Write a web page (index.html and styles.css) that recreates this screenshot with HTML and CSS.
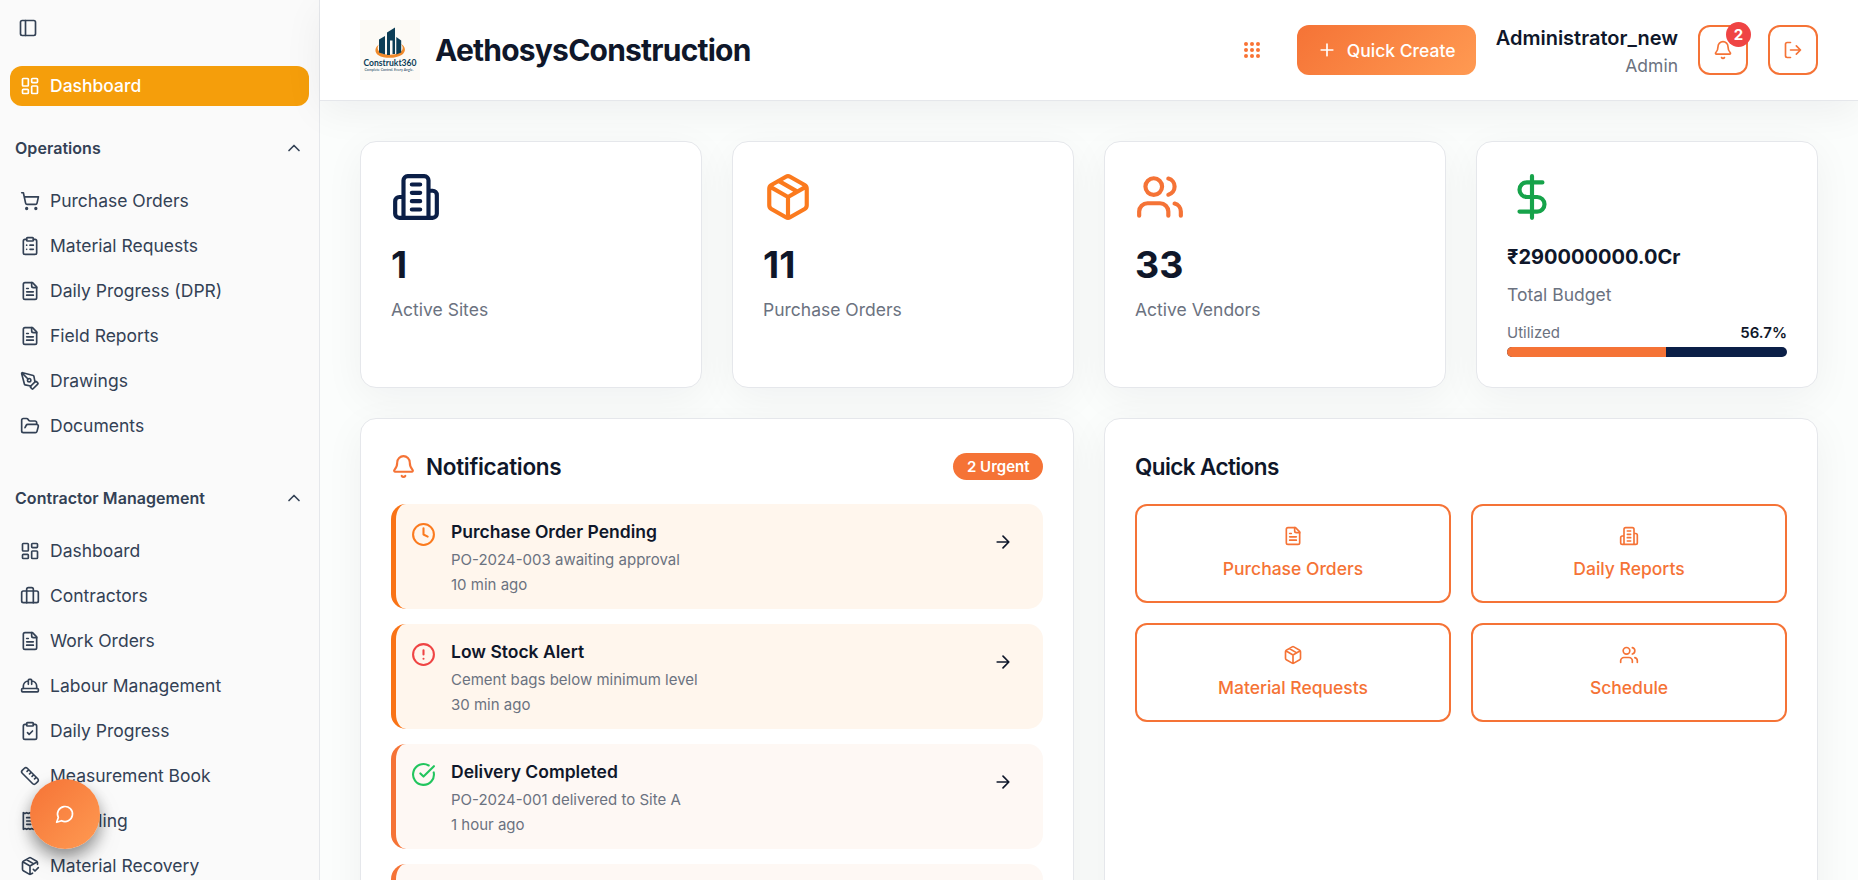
FILE: index.html
```html
<!DOCTYPE html>
<html lang="en">
<head>
    <meta charset="UTF-8">
    <meta name="viewport" content="width=device-width, initial-scale=1.0">
    <title>AethosysConstruction</title>
    <link rel="stylesheet" href="styles.css">
</head>
<body>
    <!-- Icon set -->
    <svg class="sprite" xmlns="http://www.w3.org/2000/svg">
        <symbol id="panel" viewBox="0 0 24 24"><rect width="18" height="18" x="3" y="3" rx="2"/><path d="M9 3v18"/></symbol>
        <symbol id="dashboard" viewBox="0 0 24 24"><rect width="7" height="9" x="3" y="3" rx="1"/><rect width="7" height="5" x="14" y="3" rx="1"/><rect width="7" height="9" x="14" y="12" rx="1"/><rect width="7" height="5" x="3" y="16" rx="1"/></symbol>
        <symbol id="chevron" viewBox="0 0 24 24"><path d="m18 15-6-6-6 6"/></symbol>
        <symbol id="cart" viewBox="0 0 24 24"><circle cx="8" cy="21" r="1"/><circle cx="19" cy="21" r="1"/><path d="M2.05 2.05h2l2.66 12.42a2 2 0 0 0 2 1.58h9.78a2 2 0 0 0 1.95-1.57l1.65-7.43H5.12"/></symbol>
        <symbol id="clipboard-list" viewBox="0 0 24 24"><rect width="8" height="4" x="8" y="2" rx="1"/><path d="M16 4h2a2 2 0 0 1 2 2v14a2 2 0 0 1-2 2H6a2 2 0 0 1-2-2V6a2 2 0 0 1 2-2h2M12 11h4M12 16h4M8 11h.01M8 16h.01"/></symbol>
        <symbol id="clipboard-check" viewBox="0 0 24 24"><rect width="8" height="4" x="8" y="2" rx="1"/><path d="M16 4h2a2 2 0 0 1 2 2v14a2 2 0 0 1-2 2H6a2 2 0 0 1-2-2V6a2 2 0 0 1 2-2h2M9 14l2 2 4-4"/></symbol>
        <symbol id="file" viewBox="0 0 24 24"><path d="M15 2H6a2 2 0 0 0-2 2v16a2 2 0 0 0 2 2h12a2 2 0 0 0 2-2V7Z"/><path d="M14 2v4a2 2 0 0 0 2 2h4M10 9H8M16 13H8M16 17H8"/></symbol>
        <symbol id="pen" viewBox="0 0 24 24"><path d="M15.707 21.293a1 1 0 0 1-1.414 0l-1.586-1.586a1 1 0 0 1 0-1.414l5.586-5.586a1 1 0 0 1 1.414 0l1.586 1.586a1 1 0 0 1 0 1.414z"/><path d="m18 13-1.375-6.874a1 1 0 0 0-.746-.776L3.235 2.028a1 1 0 0 0-1.207 1.207L5.35 15.879a1 1 0 0 0 .776.746L13 18M2.3 2.3l7.286 7.286"/><circle cx="11" cy="11" r="2"/></symbol>
        <symbol id="folder" viewBox="0 0 24 24"><path d="m6 14 1.5-2.9A2 2 0 0 1 9.24 10H20a2 2 0 0 1 1.94 2.5l-1.54 6a2 2 0 0 1-1.95 1.5H4a2 2 0 0 1-2-2V5a2 2 0 0 1 2-2h3.9a2 2 0 0 1 1.69.9l.81 1.2a2 2 0 0 0 1.67.9H18a2 2 0 0 1 2 2v2"/></symbol>
        <symbol id="briefcase" viewBox="0 0 24 24"><path d="M16 20V4a2 2 0 0 0-2-2h-4a2 2 0 0 0-2 2v16"/><rect width="20" height="14" x="2" y="6" rx="2"/></symbol>
        <symbol id="hat" viewBox="0 0 24 24"><path d="M10 10V5a1 1 0 0 1 1-1h2a1 1 0 0 1 1 1v5M14 6a6 6 0 0 1 6 6v3M4 15v-3a6 6 0 0 1 6-6"/><rect x="2" y="15" width="20" height="4" rx="1"/></symbol>
        <symbol id="ruler" viewBox="0 0 24 24"><path d="M21.3 15.3a2.4 2.4 0 0 1 0 3.4l-2.6 2.6a2.4 2.4 0 0 1-3.4 0L2.7 8.7a2.41 2.41 0 0 1 0-3.4l2.6-2.6a2.41 2.41 0 0 1 3.4 0ZM14.5 12.5l2-2M11.5 9.5l2-2M8.5 6.5l2-2M17.5 15.5l2-2"/></symbol>
        <symbol id="receipt" viewBox="0 0 24 24"><path d="M4 2v20l2-1 2 1 2-1 2 1 2-1 2 1 2-1 2 1V2l-2 1-2-1-2 1-2-1-2 1-2-1-2 1ZM14 8H8M16 12H8M13 16H8"/></symbol>
        <symbol id="package" viewBox="0 0 24 24"><path d="M11 21.73a2 2 0 0 0 2 0l7-4A2 2 0 0 0 21 16V8a2 2 0 0 0-1-1.73l-7-4a2 2 0 0 0-2 0l-7 4A2 2 0 0 0 3 8v8a2 2 0 0 0 1 1.73zM12 22V12M3.3 7 12 12l8.7-5M7.5 4.27l9 5.15"/></symbol>
        <symbol id="package-check" viewBox="0 0 24 24"><path d="m16 16 2 2 4-4"/><path d="M21 10V8a2 2 0 0 0-1-1.73l-7-4a2 2 0 0 0-2 0l-7 4A2 2 0 0 0 3 8v8a2 2 0 0 0 1 1.73l7 4a2 2 0 0 0 2 0l2-1.14M7.5 4.27l9 5.15M3.29 7 12 12l8.71-5M12 22V12"/></symbol>
        <symbol id="building" viewBox="0 0 24 24"><path d="M6 22V4a2 2 0 0 1 2-2h8a2 2 0 0 1 2 2v18ZM6 12H4a2 2 0 0 0-2 2v6a2 2 0 0 0 2 2h2M18 9h2a2 2 0 0 1 2 2v9a2 2 0 0 1-2 2h-2M10 6h4M10 10h4M10 14h4M10 18h4"/></symbol>
        <symbol id="users" viewBox="0 0 24 24"><path d="M16 21v-2a4 4 0 0 0-4-4H6a4 4 0 0 0-4 4v2"/><circle cx="9" cy="7" r="4"/><path d="M22 21v-2a4 4 0 0 0-3-3.87M16 3.13a4 4 0 0 1 0 7.75"/></symbol>
        <symbol id="dollar" viewBox="0 0 24 24"><path d="M12 2v20M17 5H9.5a3.5 3.5 0 0 0 0 7h5a3.5 3.5 0 0 1 0 7H6"/></symbol>
        <symbol id="bell" viewBox="0 0 24 24"><path d="M10.268 21a2 2 0 0 0 3.464 0M3.262 15.326A1 1 0 0 0 4 17h16a1 1 0 0 0 .74-1.673C19.41 13.956 18 12.499 18 8A6 6 0 0 0 6 8c0 4.499-1.411 5.956-2.738 7.326"/></symbol>
        <symbol id="logout" viewBox="0 0 24 24"><path d="M9 21H5a2 2 0 0 1-2-2V5a2 2 0 0 1 2-2h4M16 17l5-5-5-5M21 12H9"/></symbol>
        <symbol id="plus" viewBox="0 0 24 24"><path d="M5 12h14M12 5v14"/></symbol>
        <symbol id="arrow" viewBox="0 0 24 24"><path d="M5 12h14M12 5l7 7-7 7"/></symbol>
        <symbol id="clock" viewBox="0 0 24 24"><circle cx="12" cy="12" r="10"/><path d="M12 6v6l4 2"/></symbol>
        <symbol id="alert" viewBox="0 0 24 24"><circle cx="12" cy="12" r="10"/><path d="M12 8v4M12 16h.01"/></symbol>
        <symbol id="check" viewBox="0 0 24 24"><path d="M21.801 10A10 10 0 1 1 17 3.335M9 11l3 3L22 4"/></symbol>
        <symbol id="chat" viewBox="0 0 24 24"><path d="M7.9 20A9 9 0 1 0 4 16.1L2 22Z"/></symbol>
    </svg>

    <div class="app">
        <aside class="sidebar">
            <button class="toggle"><svg class="icon"><use href="#panel"/></svg></button>
            <a class="nav-item active"><svg class="icon"><use href="#dashboard"/></svg>Dashboard</a>

            <div class="nav-title"><span>Operations</span><svg class="icon"><use href="#chevron"/></svg></div>
            <nav class="nav-group">
                <a class="nav-item"><svg class="icon"><use href="#cart"/></svg>Purchase Orders</a>
                <a class="nav-item"><svg class="icon"><use href="#clipboard-list"/></svg>Material Requests</a>
                <a class="nav-item"><svg class="icon"><use href="#file"/></svg>Daily Progress (DPR)</a>
                <a class="nav-item"><svg class="icon"><use href="#file"/></svg>Field Reports</a>
                <a class="nav-item"><svg class="icon"><use href="#pen"/></svg>Drawings</a>
                <a class="nav-item"><svg class="icon"><use href="#folder"/></svg>Documents</a>
            </nav>

            <div class="nav-title"><span>Contractor Management</span><svg class="icon"><use href="#chevron"/></svg></div>
            <nav class="nav-group">
                <a class="nav-item"><svg class="icon"><use href="#dashboard"/></svg>Dashboard</a>
                <a class="nav-item"><svg class="icon"><use href="#briefcase"/></svg>Contractors</a>
                <a class="nav-item"><svg class="icon"><use href="#file"/></svg>Work Orders</a>
                <a class="nav-item"><svg class="icon"><use href="#hat"/></svg>Labour Management</a>
                <a class="nav-item"><svg class="icon"><use href="#clipboard-check"/></svg>Daily Progress</a>
                <a class="nav-item"><svg class="icon"><use href="#ruler"/></svg>Measurement Book</a>
                <a class="nav-item"><svg class="icon"><use href="#receipt"/></svg>RA Billing</a>
                <a class="nav-item"><svg class="icon"><use href="#package-check"/></svg>Material Recovery</a>
            </nav>
        </aside>

        <div class="main">
            <header class="topbar">
                <svg class="logo" viewBox="0 0 60 60">
                    <rect width="60" height="60" fill="#fcfaf6"/>
                    <path d="M19 24.500c-4.500 3-4.800 8-.500 10.800 5.500 3.600 18 3.400 23.500-.500 4.300-3.200 3.800-8.300-1-10.800 2.600 3 2.300 6.300-1.500 8.500-5.200 3-14.500 3-19 0-3.200-2.200-3.600-5-1.500-8Z" fill="#f08a2c"/>
                    <path d="M19 19.500l6-3.500v18.500l-6-2ZM27 12.500l8-5V34h-2.500V20.500h-2.500V35h-3ZM36.300 17l4.900 3.500v12l-4.900 2Z" fill="#0c3d56"/>
                    <text x="30" y="45.500" class="logo-name" textLength="53" lengthAdjust="spacingAndGlyphs">Construkt360</text>
                    <text x="29" y="50.500" class="logo-tag" textLength="49" lengthAdjust="spacingAndGlyphs">Complete Control. Every Angle.</text>
                </svg>
                <h1>AethosysConstruction</h1>

                <svg class="apps" viewBox="0 0 16 16">
                    <circle cx="2" cy="2" r="2"/><circle cx="8" cy="2" r="2"/><circle cx="14" cy="2" r="2"/>
                    <circle cx="2" cy="8" r="2"/><circle cx="8" cy="8" r="2"/><circle cx="14" cy="8" r="2"/>
                    <circle cx="2" cy="14" r="2"/><circle cx="8" cy="14" r="2"/><circle cx="14" cy="14" r="2"/>
                </svg>
                <button class="create"><svg class="icon"><use href="#plus"/></svg>Quick Create</button>
                <div class="user">
                    <div class="user-name">Administrator_new</div>
                    <div class="user-role">Admin</div>
                </div>
                <button class="square"><svg class="icon"><use href="#bell"/></svg><span class="count">2</span></button>
                <button class="square"><svg class="icon"><use href="#logout"/></svg></button>
            </header>

            <main class="content">
                <section class="stats">
                    <div class="card">
                        <svg class="icon navy"><use href="#building"/></svg>
                        <div class="value">1</div>
                        <div class="label">Active Sites</div>
                    </div>
                    <div class="card">
                        <svg class="icon amber"><use href="#package"/></svg>
                        <div class="value">11</div>
                        <div class="label">Purchase Orders</div>
                    </div>
                    <div class="card">
                        <svg class="icon orange"><use href="#users"/></svg>
                        <div class="value">33</div>
                        <div class="label">Active Vendors</div>
                    </div>
                    <div class="card">
                        <svg class="icon green"><use href="#dollar"/></svg>
                        <div class="value small">₹290000000.0Cr</div>
                        <div class="label">Total Budget</div>
                        <div class="usage"><span>Utilized</span><strong>56.7%</strong></div>
                        <div class="bar"><div class="bar-fill" style="width: 56.7%"></div></div>
                    </div>
                </section>

                <section class="panels">
                    <div class="card panel">
                        <div class="panel-head">
                            <svg class="icon orange"><use href="#bell"/></svg>
                            <h2>Notifications</h2>
                            <span class="urgent">2 Urgent</span>
                        </div>
                        <div class="notices">
                            <div class="notice pending">
                                <svg class="icon amber"><use href="#clock"/></svg>
                                <div class="notice-text"><h3>Purchase Order Pending</h3><p>PO-2024-003 awaiting approval</p><p>10 min ago</p></div>
                                <svg class="icon go"><use href="#arrow"/></svg>
                            </div>
                            <div class="notice pending">
                                <svg class="icon red"><use href="#alert"/></svg>
                                <div class="notice-text"><h3>Low Stock Alert</h3><p>Cement bags below minimum level</p><p>30 min ago</p></div>
                                <svg class="icon go"><use href="#arrow"/></svg>
                            </div>
                            <div class="notice">
                                <svg class="icon lime"><use href="#check"/></svg>
                                <div class="notice-text"><h3>Delivery Completed</h3><p>PO-2024-001 delivered to Site A</p><p>1 hour ago</p></div>
                                <svg class="icon go"><use href="#arrow"/></svg>
                            </div>
                            <div class="notice"></div>
                        </div>
                    </div>

                    <div class="card panel">
                        <div class="panel-head"><h2 class="tight">Quick Actions</h2></div>
                        <div class="actions">
                            <button class="action"><svg class="icon"><use href="#file"/></svg>Purchase Orders</button>
                            <button class="action"><svg class="icon"><use href="#building"/></svg>Daily Reports</button>
                            <button class="action"><svg class="icon"><use href="#package"/></svg>Material Requests</button>
                            <button class="action"><svg class="icon"><use href="#users"/></svg>Schedule</button>
                        </div>
                    </div>
                </section>
            </main>
        </div>
    </div>

    <button class="chat"><svg class="icon"><use href="#chat"/></svg></button>
</body>
</html>
```
FILE: styles.css
```css
* {
    box-sizing: border-box;
}

body {
    margin: 0;
    height: 100vh;
    overflow: hidden;
    font-family: "Inter", sans-serif;
    font-size: 17.5px;
    line-height: 25px;
    color: #0f172a;
    background-color: #fbfdfc;
}

h1, h2, h3, p {
    margin: 0;
}

button {
    font: inherit;
    color: inherit;
    background: none;
    border: none;
    padding: 0;
    cursor: pointer;
}

.sprite {
    display: none;
}

.icon {
    width: 20px;
    height: 20px;
    flex-shrink: 0;
    fill: none;
    stroke: currentColor;
    stroke-width: 2;
    stroke-linecap: round;
    stroke-linejoin: round;
}

.app {
    display: flex;
    height: 100vh;
    overflow: hidden;
}

/* Sidebar */
.sidebar {
    width: 320px;
    flex-shrink: 0;
    padding: 18px 10px 0;
    overflow: hidden;
    background-color: #fafafa;
    border-right: 1px solid #e5e7eb;
    color: #334155;
}

.toggle {
    display: block;
    height: 20px;
    margin: 0 0 28px 8px;
}

.toggle svg {
    display: block;
}

.nav-item {
    display: flex;
    align-items: center;
    gap: 10px;
    height: 40px;
    padding: 0 10px;
    border-radius: 12px;
    line-height: 24px;
}

.nav-item.active {
    background-color: #f59e0b;
    color: white;
    font-weight: 500;
}

.nav-title {
    display: flex;
    align-items: center;
    justify-content: space-between;
    height: 40px;
    margin: 22px 5px 13px 5px;
    font-size: 16px;
    font-weight: 600;
    letter-spacing: 0.05px;
}

.nav-group {
    display: flex;
    flex-direction: column;
    gap: 5px;
}

.nav-group + .nav-title {
    margin-top: 32px;
}

/* Header */
.main {
    flex: 1;
    min-width: 0;
}

.topbar {
    position: relative;
    display: flex;
    align-items: center;
    height: 101px;
    padding: 0 40px;
    background-color: white;
    border-bottom: 1px solid #e5e7eb;
    box-shadow: 0 10px 40px rgba(15, 23, 42, 0.06);
}

.logo {
    width: 60px;
    height: 60px;
    margin-right: 15px;
}

.logo-name, .logo-tag {
    font-family: "Lato", sans-serif;
    font-size: 8.5px;
    font-weight: 700;
    fill: #0c3d56;
    text-anchor: middle;
}

.logo-tag {
    font-size: 3.6px;
    font-weight: 400;
}

h1 {
    font-size: 30px;
    line-height: 40px;
    font-weight: 700;
    letter-spacing: -0.78px;
}

.apps {
    width: 16px;
    height: 16px;
    margin-left: auto;
    margin-right: 37px;
    fill: #f97334;
}

.create {
    display: flex;
    align-items: center;
    justify-content: center;
    gap: 10px;
    width: 179px;
    height: 50px;
    margin-right: 20px;
    border-radius: 12px;
    background: linear-gradient(135deg, #f57336, #ff9a52);
    color: white;
    font-weight: 500;
}

.user {
    margin-right: 20px;
    text-align: right;
}

.user-name {
    font-size: 20px;
    line-height: 30px;
    font-weight: 600;
}

.user-role {
    color: #6b7280;
}

.square {
    position: relative;
    display: flex;
    align-items: center;
    justify-content: center;
    width: 50px;
    height: 50px;
    border: 2px solid #f57336;
    border-radius: 12px;
    color: #f57336;
}

.square + .square {
    margin-left: 20px;
}

.count {
    position: absolute;
    top: -5px;
    right: -5px;
    width: 25px;
    height: 25px;
    border-radius: 50%;
    background-color: #ef4444;
    color: white;
    font-size: 15px;
    font-weight: 700;
}

/* Dashboard */
.content {
    padding: 40px;
}

.card {
    padding: 30px;
    border: 1px solid #e5e7eb;
    border-radius: 16px;
    background-color: white;
    box-shadow: 0 10px 40px rgba(15, 23, 42, 0.05);
}

.stats {
    display: grid;
    grid-template-columns: repeat(4, 1fr);
    gap: 30px;
    margin-bottom: 30px;
}

.stats .card {
    height: 247px;
}

.stats .icon {
    display: block;
    width: 50px;
    height: 50px;
    margin-bottom: 20px;
}

.value {
    font-size: 37.5px;
    line-height: 45px;
    font-weight: 700;
    margin-bottom: 10px;
}

.value.small {
    font-size: 20px;
    line-height: 30px;
}

.label {
    color: #6b7280;
}

.usage {
    display: flex;
    justify-content: space-between;
    margin-top: 16px;
    font-size: 15px;
    line-height: 20px;
    color: #6b7280;
}

.usage strong {
    font-weight: 600;
    color: #0f172a;
}

.bar {
    height: 10px;
    margin-top: 4px;
    overflow: hidden;
    border-radius: 5px;
    background-color: #0b1f47;
}

.bar-fill {
    height: 100%;
    background-color: #f57336;
}

.navy { color: #0b1f47; }
.amber { color: #fb7a1e; }
.orange { color: #f57336; }
.green { color: #16a34a; }
.lime { color: #22c55e; }
.red { color: #ef4444; }

.panels {
    display: grid;
    grid-template-columns: 1fr 1fr;
    gap: 30px;
}

.panel {
    height: 640px;
}

.panel-head {
    display: flex;
    align-items: center;
    height: 35px;
    margin-bottom: 20px;
}

.panel-head .icon {
    width: 25px;
    height: 25px;
    margin-right: 10px;
}

h2 {
    font-size: 22.5px;
    line-height: 35px;
    font-weight: 600;
    letter-spacing: -0.3px;
}

h2.tight {
    letter-spacing: -0.6px;
}

.urgent {
    margin-left: auto;
    padding: 1px 13.5px;
    border-radius: 14px;
    background-color: #f57336;
    color: white;
    font-size: 15px;
    font-weight: 600;
}

.notices {
    display: flex;
    flex-direction: column;
    gap: 15px;
}

.notice {
    display: flex;
    align-items: flex-start;
    gap: 15px;
    height: 105px;
    padding: 15px;
    border-left: 5px solid #f57336;
    border-radius: 15px;
    background-color: #fef8f4;
}

.notice.pending {
    border-left-color: #f97316;
    background-color: #fff6ed;
}

.notice .icon {
    width: 25px;
    height: 25px;
    margin-top: 3px;
}

.notice .go {
    width: 20px;
    height: 20px;
    margin: 13px 15px 0 0;
}

.notice-text {
    flex: 1;
}

h3 {
    margin-bottom: 3px;
    font-size: 17.5px;
    line-height: 25px;
    font-weight: 600;
}

.notice p {
    font-size: 15px;
    line-height: 25px;
    color: #6b7280;
}

.actions {
    display: grid;
    grid-template-columns: 1fr 1fr;
    gap: 20px;
}

.action {
    display: flex;
    flex-direction: column;
    align-items: center;
    gap: 10px;
    height: 99px;
    padding-top: 20px;
    border: 2px solid #f57336;
    border-radius: 12px;
    color: #f57336;
    font-weight: 500;
}

/* Floating chat button */
.chat {
    position: fixed;
    left: 30px;
    bottom: 31px;
    display: flex;
    align-items: center;
    justify-content: center;
    width: 70px;
    height: 70px;
    border-radius: 50%;
    background: linear-gradient(135deg, #f57336, #ff9a52);
    box-shadow: 0 8px 16px rgba(0, 0, 0, 0.4), 0 12px 30px rgba(15, 23, 42, 0.08);
    color: white;
}
```
